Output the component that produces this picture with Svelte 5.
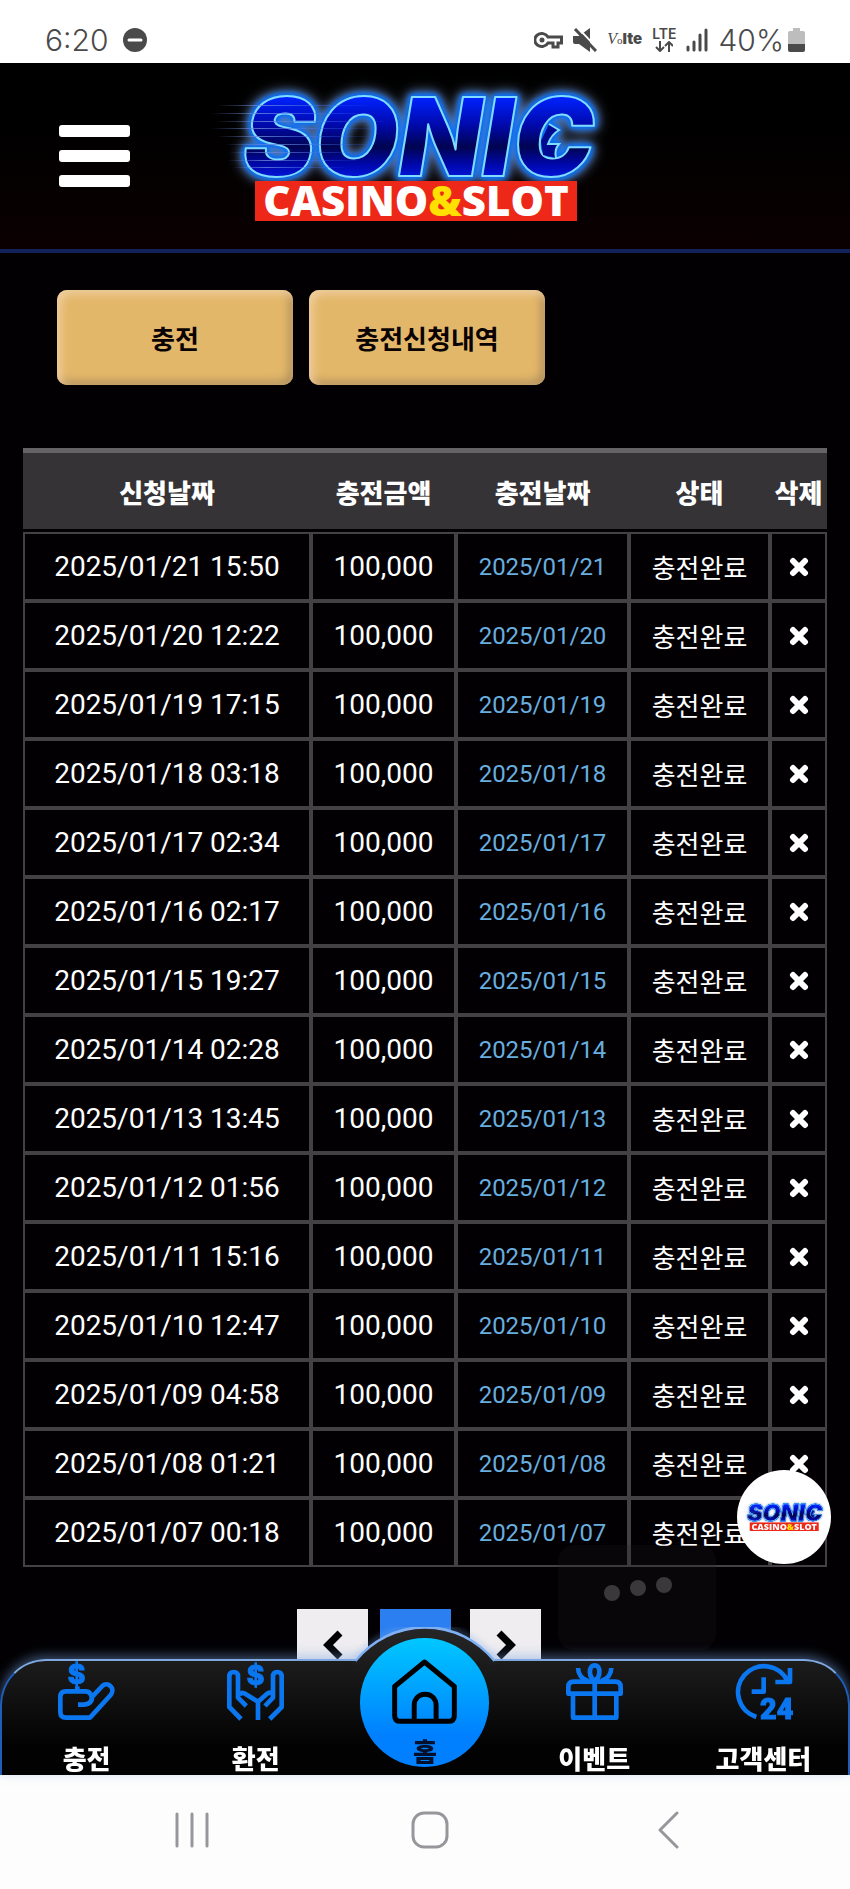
<script>
  const columns = ['신청날짜', '충전금액', '충전날짜', '상태', '삭제']

  let requests = $state(
    [
      ['2025/01/21', '15:50'],
      ['2025/01/20', '12:22'],
      ['2025/01/19', '17:15'],
      ['2025/01/18', '03:18'],
      ['2025/01/17', '02:34'],
      ['2025/01/16', '02:17'],
      ['2025/01/15', '19:27'],
      ['2025/01/14', '02:28'],
      ['2025/01/13', '13:45'],
      ['2025/01/12', '01:56'],
      ['2025/01/11', '15:16'],
      ['2025/01/10', '12:47'],
      ['2025/01/09', '04:58'],
      ['2025/01/08', '01:21'],
      ['2025/01/07', '00:18']
    ].map(([date, time]) => ({ date, time, amount: 100000, status: '충전완료' }))
  )

  function remove(request) {
    requests = requests.filter(r => r !== request)
  }
</script>

{#snippet logo()}
  <svg class="logo" viewBox="0 0 420 150" role="img" aria-label="SONIC CASINO&SLOT">
    <defs>
      <linearGradient id="sonic-fill" x1="0" y1="0" x2="0" y2="1">
        <stop offset="0.2" stop-color="#0022ff" />
        <stop offset="0.42" stop-color="#0008a8" />
        <stop offset="0.58" stop-color="#000450" />
        <stop offset="0.72" stop-color="#0008b0" />
        <stop offset="0.9" stop-color="#0026ff" />
      </linearGradient>
      <linearGradient id="sonic-speed" x1="0" y1="0" x2="1" y2="0">
        <stop offset="0" stop-color="#6a86d8" stop-opacity="0" />
        <stop offset="0.3" stop-color="#6a86d8" stop-opacity="0.8" />
        <stop offset="1" stop-color="#2a60ff" stop-opacity="0.1" />
      </linearGradient>
    </defs>
    <g class="neon">
      <text class="sonic" x="38" y="95">SONIC</text>
      <path d="M344 43L354 49Q346 54 343 63L354 63Q349 69 351 77L338 74L336 60z" fill="#000a90" />
      <path d="M344 43L354 49Q346 54 343 63L354 63Q349 69 351 77" fill="none" stroke="#7fdcff" stroke-width="2" />
    </g>
    <g fill="url(#sonic-speed)">
      <rect x="12" y="24" width="150" height="1" />
      <rect x="6" y="32" width="160" height="1" />
      <rect x="10" y="40" width="170" height="1" />
      <rect x="6" y="47" width="160" height="1" />
      <rect x="12" y="55" width="150" height="1" />
      <rect x="20" y="63" width="150" height="1" />
      <rect x="24" y="71" width="130" height="1" />
      <rect x="22" y="79" width="130" height="1" />
      <rect x="28" y="86" width="110" height="1" />
    </g>
    <rect x="50" y="100" width="322" height="40" fill="#ee2818" />
    <text class="casino" x="211" y="135" text-anchor="middle">CASINO<tspan class="amp">&amp;</tspan>SLOT</text>
  </svg>
{/snippet}

<div class="status-bar">
  <span>6:20</span>
  <svg width="24" height="24" viewBox="0 0 24 24">
    <circle cx="12" cy="12" r="12" fill="#4a4a4a" />
    <path d="M6 12h12" stroke="#fff" stroke-width="3" stroke-linecap="round" />
  </svg>
  <div class="indicators">
    <svg width="29" height="18" viewBox="0 0 29 18" fill="none" stroke="#4a4a4a" stroke-width="3">
      <path d="M14 6a7 6.500 0 1 0 0 6h5v4h5v-4h3.500V6z" />
      <circle cx="8" cy="9" r="2.500" fill="#4a4a4a" stroke="none" />
    </svg>
    <svg width="24" height="24" viewBox="0 0 24 24" fill="#4a4a4a">
      <path d="M0 8h6v8H2q-2 0-2-2zM6 8l11-8v24L6 16z" />
      <path d="M4 -1l22 23" stroke="#fff" stroke-width="2" />
      <path d="M2 1l21 22" stroke="#4a4a4a" stroke-width="3" />
    </svg>
    <span class="volte"><i>V</i><small>o</small><b>lte</b></span>
    <span class="lte">
      LTE
      <svg width="18" height="11" viewBox="0 0 18 11" fill="none" stroke="#4a4a4a" stroke-width="2">
        <path d="M5 0v10M1 6l4 4 4-4M14 11V1M10 5l4-4 4 4" />
      </svg>
    </span>
    <svg width="22" height="24" viewBox="0 0 22 24" stroke="#4a4a4a" stroke-width="3" stroke-linecap="round">
      <path d="M2 19v3M8 14v8M14 7v15M20 2v20" />
    </svg>
    <span class="battery">
      40%
      <svg width="17" height="24" viewBox="0 0 17 24">
        <path d="M5 0h7v3h3q2 0 2 2v11H0V5q0-2 2-2h3z" fill="#bdbdbd" />
        <path d="M0 16h17v6q0 2-2 2H2q-2 0-2-2z" fill="#4a4a4a" />
      </svg>
    </span>
  </div>
</div>

<header>
  <button class="menu" aria-label="메뉴"><i></i><i></i><i></i></button>
  {@render logo()}
</header>

<main>
  <div class="tabs">
    <button>충전</button>
    <button>충전신청내역</button>
  </div>

  <table>
    <colgroup>
      <col class="requested" />
      <col class="amount" />
      <col class="charged" />
      <col class="status" />
      <col class="delete" />
    </colgroup>
    <thead>
      <tr>
        {#each columns as column}
          <th>{column}</th>
        {/each}
      </tr>
    </thead>
    <tbody>
      {#each requests as request}
        <tr>
          <td>{request.date} {request.time}</td>
          <td>{request.amount.toLocaleString('en-US')}</td>
          <td class="date">{request.date}</td>
          <td class="state">{request.status}</td>
          <td>
            <button class="remove" aria-label="삭제" onclick={() => remove(request)}>
              <svg width="20" height="20" viewBox="0 0 20 20">
                <path d="M4 4l12 12M16 4L4 16" stroke="#fff" stroke-width="6" stroke-linecap="round" />
              </svg>
            </button>
          </td>
        </tr>
      {/each}
    </tbody>
  </table>

  <div class="pager">
    <button aria-label="이전">
      <svg width="20" height="30" viewBox="0 0 20 30"><path d="M17 3L5 15l12 12" /></svg>
    </button>
    <span class="pages"><button class="current" aria-label="1"></button></span>
    <button aria-label="다음">
      <svg width="20" height="30" viewBox="0 0 20 30"><path d="M3 3l12 12L3 27" /></svg>
    </button>
  </div>
</main>

<div class="bottom">
  <div class="ghost">
    <svg width="68" height="24" viewBox="0 0 68 24" fill="#3a383b">
      <circle cx="8" cy="16" r="8" />
      <circle cx="34" cy="11" r="8" />
      <circle cx="60" cy="8" r="8" />
    </svg>
  </div>
  <button class="bubble">{@render logo()}</button>

  <nav>
    <svg class="hump" width="160" height="44" viewBox="0 0 160 44">
      <defs>
        <linearGradient id="hump-fill" x1="0" y1="0" x2="0" y2="1">
          <stop offset="0" stop-color="#262626" />
          <stop offset="1" stop-color="#1c1c1c" />
        </linearGradient>
      </defs>
      <path class="rim" d="M11 34A88 88 0 0 1 149 34" />
      <path d="M12 34A88 88 0 0 1 148 34V36H12z" fill="url(#hump-fill)" />
    </svg>
    <a href="#deposit">
      <svg class="icon" viewBox="0 0 171 171">
        <path d="M58 85V70M60 125H78C98 123 106 110 99 96Q95 85 82 85H24Q7 85 7 102V147Q7 164 24 164H96L158 96C166 86 164 75 157 69C150 62 140 62 133 69L103 101" />
        <text x="56" y="64">$</text>
      </svg>
      <span>충전</span>
    </a>
    <a href="#withdraw">
      <svg class="icon" viewBox="0 0 171 171">
        <path d="M93 171V114M42 168L7 132V40Q7 27 20 27T33 40V104L58 129M38 98Q40 86 52 91L93 116 122 91Q134 85 138 97M128 168L164 132V40Q164 27 151 27T138 40V104L114 129" />
        <text x="86" y="66">$</text>
      </svg>
      <span>환전</span>
    </a>
    <a class="home" href="#home">
      <svg viewBox="0 0 196 196">
        <path d="M98 9L188 83V170Q188 188 170 188H26Q8 188 8 170V83zM67 188V140C67 95 133 95 133 140V188" />
      </svg>
      <span>홈</span>
    </a>
    <a href="#event">
      <svg class="icon" viewBox="0 0 171 171">
        <path d="M21 97V164H151V97M7 92V72Q7 56 23 56H148Q164 56 164 72V92zM86 50V164M86 52C68 44 66 7 86 7S104 44 86 52M36 15C37 35 48 48 66 53M136 15C135 35 124 48 106 53" />
      </svg>
      <span>이벤트</span>
    </a>
    <a href="#support">
      <svg class="icon" viewBox="0 0 171 171">
        <path d="M64 162A78 78 0 1 1 158 55M165 15V57H121M86 43V86H50" />
        <text class="hours" x="125" y="169">24</text>
      </svg>
      <span>고객센터</span>
    </a>
  </nav>

  <div class="system">
    <button aria-label="최근 앱">
      <svg width="36" height="38" viewBox="0 0 36 38"><path d="M3 3v32M18 3v32M33 3v32" /></svg>
    </button>
    <button aria-label="홈 화면">
      <svg width="38" height="38" viewBox="0 0 38 38"><rect x="2" y="2" width="34" height="34" rx="11" /></svg>
    </button>
    <button aria-label="뒤로">
      <svg width="22" height="38" viewBox="0 0 22 38"><path d="M20 2L3 19l17 17" /></svg>
    </button>
  </div>
</div>

<style>
  :global(body) {
    background: #020003;
    color: #fff;
    font-family: Roboto, 'Noto Sans CJK KR', sans-serif;
  }

  button {
    border: 0;
    padding: 0;
    background: none;
    font-family: inherit;
    color: inherit;
    cursor: pointer;
  }

  svg {
    display: block;
    flex: none;
  }

  .status-bar {
    display: flex;
    align-items: center;
    gap: 15px;
    height: 63px;
    padding: 16px 45px 0;
    box-sizing: border-box;
    background: #fff;
    color: #4a4a4a;
    font: 300 30px Inter, sans-serif;
  }

  .indicators {
    display: flex;
    align-items: center;
    gap: 10px;
    margin-left: auto;
  }

  .volte {
    display: flex;
    align-items: baseline;
    font: 300 16px/24px 'Liberation Serif', serif;
  }

  .volte small {
    font-size: 11px;
  }

  .volte b {
    font: 900 15px Inter, sans-serif;
  }

  .lte {
    display: flex;
    flex-direction: column;
    align-items: center;
    font: 600 14px/14px Inter, sans-serif;
  }

  .battery {
    display: flex;
    align-items: center;
    gap: 4px;
  }

  header {
    display: flex;
    align-items: center;
    gap: 75px;
    height: 186px;
    padding: 0 59px;
    border-bottom: 4px solid #14225c;
    background: linear-gradient(#000 30%, #0a0001);
  }

  .menu {
    display: flex;
    flex-direction: column;
    gap: 13px;
    width: 71px;
  }

  .menu i {
    height: 12px;
    border-radius: 3px;
    background: #fff;
  }

  .logo {
    width: 420px;
    overflow: visible;
  }

  .neon {
    filter: drop-shadow(0 0 2px #0a6cf0) drop-shadow(0 0 2px #0a6cf0) drop-shadow(0 0 3px #0a6cf0)
      drop-shadow(0 0 6px #7f98c8);
  }

  .sonic {
    fill: url(#sonic-fill);
    stroke: #7fdcff;
    stroke-width: 2px;
    stroke-linejoin: round;
    font: italic 900 108px Inter, sans-serif;
  }

  .casino {
    font: 800 42px 'Open Sans', sans-serif;
    fill: #fff;
  }

  .amp {
    fill: #ffe000;
  }

  .tabs {
    display: flex;
    gap: 16px;
    padding: 37px 57px 63px;
  }

  .tabs button {
    width: 236px;
    height: 95px;
    border-radius: 10px;
    background: #e3b76a;
    box-shadow: inset 4px 4px 8px #f0cfa0, inset -4px -4px 8px #b0905c;
    color: #0a0303;
    font-size: 26px;
    font-weight: 700;
  }

  table {
    width: calc(100% - 46px);
    margin: 0 23px;
    table-layout: fixed;
    border-spacing: 0;
  }

  .requested {
    width: 288px;
  }

  .amount {
    width: 145px;
  }

  .charged {
    width: 173px;
  }

  .status {
    width: 141px;
  }

  .delete {
    width: 57px;
  }

  th {
    height: 84px;
    box-sizing: border-box;
    padding: 0;
    border-top: 5px solid #656365;
    border-bottom: 3px solid #020003;
    background: #353335;
    font-size: 26px;
    font-weight: 900;
    white-space: nowrap;
  }

  td {
    height: 69px;
    box-sizing: border-box;
    padding: 0;
    border: 2px solid #434143;
    text-align: center;
    font-size: 28px;
    white-space: nowrap;
  }

  .date {
    color: #68aedf;
    font-size: 24px;
  }

  .state {
    font-size: 26px;
  }

  .remove {
    display: block;
    margin: 0 auto;
  }

  .pager {
    display: flex;
    justify-content: center;
    padding: 42px 0 94px;
  }

  .pager button {
    width: 71px;
    height: 71px;
    margin-right: 12px;
    background: #efedef;
  }

  .pager .current {
    background: #2b7ff0;
  }

  .pages {
    padding-right: 7px;
  }

  .pager svg {
    margin: 0 auto;
    fill: none;
    stroke: #000;
    stroke-width: 7px;
  }

  .bottom {
    position: fixed;
    right: 0;
    bottom: 0;
    left: 0;
  }

  .ghost {
    position: absolute;
    right: 134px;
    bottom: 239px;
    width: 158px;
    height: 105px;
    box-sizing: border-box;
    padding: 32px 46px;
    border-radius: 16px;
    background: rgba(38, 30, 38, 0.2);
  }

  .bubble {
    position: absolute;
    right: 19px;
    bottom: 325px;
    display: grid;
    place-items: center;
    width: 94px;
    height: 94px;
    border-radius: 50%;
    background: #fff;
  }

  .bubble .logo {
    width: 90px;
  }

  nav {
    position: relative;
    display: grid;
    grid-template-columns: repeat(5, 1fr);
    height: 116px;
    box-sizing: border-box;
    border: 2px solid #1f5db8;
    border-top-color: #7fa8e0;
    border-bottom: 0;
    border-radius: 46px 46px 0 0;
    background: linear-gradient(#1c1c1c, #020202 75%);
    box-shadow: 0 -3px 12px rgba(120, 165, 230, 0.5);
  }

  .hump {
    position: absolute;
    top: -34px;
    left: 50%;
    transform: translateX(-50%);
  }

  .rim {
    fill: none;
    stroke: #7fb0f4;
    stroke-width: 3px;
    filter: drop-shadow(0 -2px 3px rgba(120, 165, 230, 0.6));
  }

  nav a {
    position: relative;
    display: flex;
    flex-direction: column;
    align-items: center;
    justify-content: space-between;
    padding-top: 2px;
    color: #fff;
    font-size: 26px;
    font-weight: 900;
    line-height: 30px;
    text-decoration: none;
    white-space: nowrap;
  }

  nav path {
    stroke-linejoin: round;
  }

  .icon {
    width: 57px;
    height: 57px;
    overflow: visible;
  }

  .icon path {
    fill: none;
    stroke: #0a76f0;
    stroke-width: 14px;
  }

  .icon text {
    fill: #0a76f0;
    stroke: #0a76f0;
    stroke-width: 3px;
    font: 800 80px Inter, sans-serif;
    text-anchor: middle;
  }

  .icon .hours {
    font: 900 86px Roboto, sans-serif;
  }

  nav .home {
    justify-self: center;
    justify-content: flex-start;
    gap: 14px;
    width: 129px;
    height: 129px;
    box-sizing: border-box;
    margin-top: -23px;
    padding-top: 21px;
    border-radius: 50%;
    background: linear-gradient(#00c8ff, #0080ff 75%);
    color: #03102c;
  }

  .home svg {
    width: 65px;
    height: 65px;
  }

  .home path {
    fill: none;
    stroke: #000;
    stroke-width: 15px;
  }

  .system {
    display: grid;
    grid-template-columns: repeat(3, 1fr);
    height: 114px;
    box-sizing: border-box;
    padding: 0 63px 4px 73px;
    background: #fdfdfd;
  }

  .system svg {
    margin: 0 auto;
    fill: none;
    stroke: #98969a;
    stroke-width: 3px;
    stroke-linecap: round;
    stroke-linejoin: round;
  }
</style>
